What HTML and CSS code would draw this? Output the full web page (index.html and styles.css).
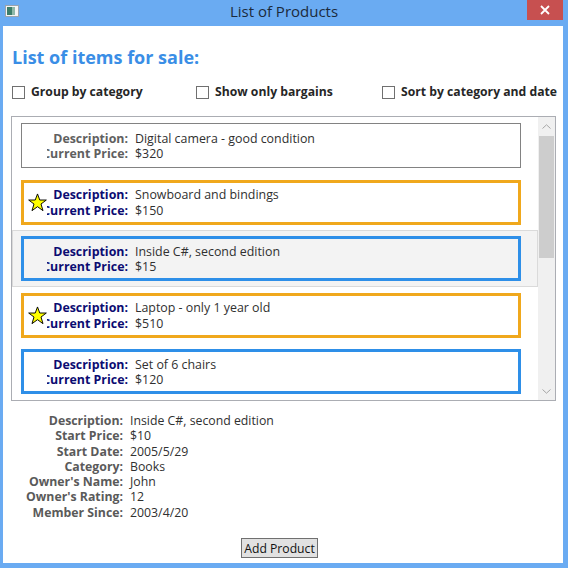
FILE: index.html
```html
<!DOCTYPE html>
<html>
<head>
<meta charset="utf-8">
<link rel="stylesheet" href="styles.css">
</head>
<body>
<div class="window">
  <div class="titlebar">
    <svg class="app-icon" width="14" height="12" viewBox="0 0 14 12">
      <rect x="0.5" y="0.5" width="13" height="11" fill="#f4f4f4" stroke="#9aa3ad"/>
      <rect x="2" y="2" width="5" height="8" fill="#3c7d6a"/>
      <rect x="7" y="2" width="3" height="8" fill="#8fb8a8"/>
    </svg>
    <div class="title">List of Products</div>
    <div class="close">
      <svg width="10" height="10" viewBox="0 0 10 10"><path d="M1 1 L9 9 M9 1 L1 9" stroke="#fff" stroke-width="1.8"/></svg>
    </div>
  </div>
  <div class="client">
    <h1 class="heading">List of items for sale:</h1>
    <div class="options">
      <label class="opt opt-1"><span class="box"></span>Group by category</label>
      <label class="opt opt-2"><span class="box"></span>Show only bargains</label>
      <label class="opt opt-3"><span class="box"></span>Sort by category and date</label>
    </div>
    <div class="listbox">
      <div class="rows">
        <div class="row">
          <div class="item plain">
            <div class="star-col"></div>
            <div class="labels gray"><div class="lab">Description:</div><div class="lab">Current Price:</div></div>
            <div class="values"><div>Digital camera - good condition</div><div>$320</div></div>
          </div>
        </div>
        <div class="row">
          <div class="item featured">
            <div class="star-col"><svg width="19" height="19" viewBox="0 0 20 20"><polygon points="10,1 12.4,7.4 19.3,7.4 13.7,11.6 15.8,18.6 10,14.4 4.2,18.6 6.3,11.6 0.7,7.4 7.6,7.4" fill="#ffff00" stroke="#000" stroke-width="1"/></svg></div>
            <div class="labels navy"><div class="lab">Description:</div><div class="lab">Current Price:</div></div>
            <div class="values"><div>Snowboard and bindings</div><div>$150</div></div>
          </div>
        </div>
        <div class="row selected">
          <div class="item normal">
            <div class="star-col"></div>
            <div class="labels navy"><div class="lab">Description:</div><div class="lab">Current Price:</div></div>
            <div class="values"><div>Inside C#, second edition</div><div>$15</div></div>
          </div>
        </div>
        <div class="row">
          <div class="item featured">
            <div class="star-col"><svg width="19" height="19" viewBox="0 0 20 20"><polygon points="10,1 12.4,7.4 19.3,7.4 13.7,11.6 15.8,18.6 10,14.4 4.2,18.6 6.3,11.6 0.7,7.4 7.6,7.4" fill="#ffff00" stroke="#000" stroke-width="1"/></svg></div>
            <div class="labels navy"><div class="lab">Description:</div><div class="lab">Current Price:</div></div>
            <div class="values"><div>Laptop - only 1 year old</div><div>$510</div></div>
          </div>
        </div>
        <div class="row">
          <div class="item normal">
            <div class="star-col"></div>
            <div class="labels navy"><div class="lab">Description:</div><div class="lab">Current Price:</div></div>
            <div class="values"><div>Set of 6 chairs</div><div>$120</div></div>
          </div>
        </div>
      </div>
      <div class="scrollbar">
        <div class="sb-btn"><svg width="9" height="5" viewBox="0 0 9 5"><path d="M0.5 4.5 L4.5 0.8 L8.5 4.5" fill="none" stroke="#a6a6a6" stroke-width="1"/></svg></div>
        <div class="sb-track"><div class="sb-thumb"></div></div>
        <div class="sb-btn"><svg width="9" height="5" viewBox="0 0 9 5"><path d="M0.5 0.5 L4.5 4.2 L8.5 0.5" fill="none" stroke="#a6a6a6" stroke-width="1"/></svg></div>
      </div>
    </div>
    <div class="details">
      <div class="dl">Description:</div><div class="dv">Inside C#, second edition</div>
      <div class="dl">Start Price:</div><div class="dv">$10</div>
      <div class="dl">Start Date:</div><div class="dv">2005/5/29</div>
      <div class="dl">Category:</div><div class="dv">Books</div>
      <div class="dl">Owner's Name:</div><div class="dv">John</div>
      <div class="dl">Owner's Rating:</div><div class="dv">12</div>
      <div class="dl">Member Since:</div><div class="dv">2003/4/20</div>
    </div>
    <div class="actions">
      <button class="btn">Add Product</button>
    </div>
  </div>
</div>
</body>
</html>
```
FILE: styles.css
```css
* { box-sizing: border-box; }
html, body { margin: 0; padding: 0; }
body {
  width: 568px;
  height: 568px;
  background: #6aabf2;
  font-family: "Open Sans", "Noto Sans", sans-serif;
  overflow: hidden;
}
.window {
  width: 568px;
  height: 568px;
  display: flex;
  flex-direction: column;
}
.titlebar {
  height: 26px;
  display: flex;
  align-items: flex-start;
  position: relative;
}
.app-icon {
  margin: 5px 0 0 5px;
}
.title {
  position: absolute;
  left: 0;
  right: 0;
  top: 1px;
  text-align: center;
  font-size: 15px;
  line-height: 20px;
  color: #1b2a3c;
}
.close {
  position: absolute;
  right: 5px;
  top: 0;
  width: 36px;
  height: 20px;
  background: #c75050;
  display: flex;
  align-items: center;
  justify-content: center;
}
.client {
  margin: 0 5px 5px 3px;
  flex: 1;
  background: #fff;
  display: flex;
  flex-direction: column;
}
.heading {
  margin: 19px 0 0 9px;
  font-size: 18px;
  line-height: 24px;
  font-weight: bold;
  color: #3a8ee6;
}
.options {
  margin-top: 15px;
  height: 16px;
  display: flex;
  font-size: 12.2px;
  line-height: 16px;
  font-weight: bold;
  color: #262626;
}
.opt {
  display: flex;
  align-items: center;
  white-space: nowrap;
}
.opt-1 { margin-left: 9px; width: 184px; }
.opt-2 { width: 186px; }
.box {
  width: 13px;
  height: 13px;
  border: 1px solid #707070;
  background: #fff;
  margin-right: 6px;
}
.listbox {
  margin: 16px 7px 0 8px;
  height: 285px;
  border: 1px solid #abadb3;
  display: flex;
  overflow: hidden;
}
.rows {
  flex: 1;
  overflow: hidden;
}
.row {
  height: 56.5px;
  border: 1px solid transparent;
  padding: 5px 15px 0 8px;
}
.row.selected {
  background: #f3f3f3;
  border-color: #dadada;
}
.item {
  height: 45px;
  width: 500px;
  display: flex;
  align-items: center;
  font-size: 12.4px;
  line-height: 15.5px;
  padding-top: 1px;
}
.item.plain { border: 1px solid #828282; padding-left: 6px; }
.item.featured { border: 3px solid #f0a81c; padding-left: 4px; }
.item.normal { border: 3px solid #2e8fe8; padding-left: 4px; }
.star-col {
  width: 19px;
  height: 19px;
  flex: none;
  display: flex;
  align-items: center;
}
.labels {
  width: 81px;
  flex: none;
  overflow: hidden;
  font-weight: bold;
}
.labels.gray { color: #606060; }
.labels.navy { color: #0c0c72; }
.lab {
  display: flex;
  justify-content: flex-end;
  white-space: nowrap;
}
.values {
  margin-left: 7px;
  color: #303030;
  white-space: nowrap;
}
.scrollbar {
  width: 17px;
  flex: none;
  background: #f0f0f0;
  display: flex;
  flex-direction: column;
}
.sb-btn {
  height: 18px;
  display: flex;
  align-items: center;
  justify-content: center;
}
.sb-track {
  flex: 1;
  padding: 1px 1px 0 1px;
}
.sb-thumb {
  height: 122px;
  background: #cdcdcd;
}
.details {
  margin: 12px 0 0 0;
  display: grid;
  grid-template-columns: 120px auto;
  column-gap: 7px;
  font-size: 12.3px;
  line-height: 15.3px;
}
.dl {
  text-align: right;
  font-weight: bold;
  color: #5a5a5a;
  white-space: nowrap;
}
.dv {
  color: #303030;
  white-space: nowrap;
}
.actions {
  margin-top: 18px;
  display: flex;
  justify-content: center;
  padding-right: 7px;
}
.btn {
  height: 20px;
  padding: 0 2px;
  background: #e1e1e1;
  border: 1px solid #707070;
  border-radius: 0;
  font-family: "Open Sans", "Noto Sans", sans-serif;
  font-size: 12.2px;
  line-height: 17px;
  color: #111;
  white-space: nowrap;
}
```
